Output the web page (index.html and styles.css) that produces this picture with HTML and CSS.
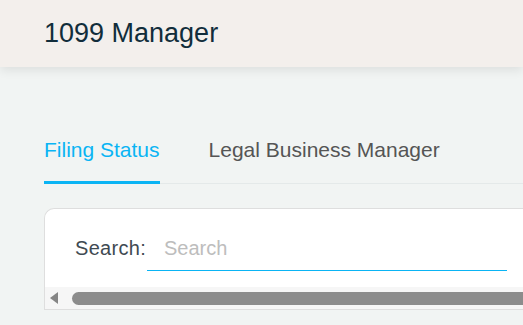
FILE: index.html
```html
<!DOCTYPE html>
<html lang="en">
<head>
<meta charset="utf-8">
<title>1099 Manager</title>
<link rel="stylesheet" href="styles.css">
</head>
<body>
<header class="app-header">
  <h1 class="app-title">1099 Manager</h1>
</header>
<main class="main">
  <nav class="tabs">
    <a class="tab tab-active">Filing Status</a>
    <a class="tab">Legal Business Manager</a>
  </nav>
  <section class="card">
    <div class="search-row">
      <label class="search-label" for="q">Search:</label>
      <input class="search-input" id="q" type="text" placeholder="Search">
    </div>
    <div class="hscroll">
      <span class="hscroll-arrow"></span>
      <span class="hscroll-thumb"></span>
    </div>
  </section>
</main>
</body>
</html>
```

FILE: styles.css
```css
html, body {
  margin: 0;
  padding: 0;
}
body {
  background: #f1f4f3;
  font-family: "Liberation Sans", Arial, sans-serif;
  height: 325px;
  overflow: hidden;
}
.app-header {
  height: 67px;
  background: #f3efec;
  display: flex;
  align-items: center;
  padding-left: 44px;
  box-shadow: 0 3px 10px rgba(0, 0, 0, 0.09);
  position: relative;
  z-index: 1;
}
.app-title {
  margin: 0;
  font-size: 27px;
  font-weight: 400;
  color: #112d3b;
  line-height: 31px;
}
.main {
  padding-left: 44px;
}
.tabs {
  margin-top: 71px;
  display: flex;
  gap: 49px;
  border-bottom: 1px solid #e4e9e9;
}
.tab {
  font-size: 21px;
  line-height: 24px;
  color: #555555;
  padding-bottom: 19px;
  border-bottom: 3px solid transparent;
  margin-bottom: -1px;
}
.tab-active {
  color: #0ab4f4;
  border-bottom-color: #0ab4f4;
}
.card {
  margin-top: 24px;
  background: #ffffff;
  border: 1px solid #dedede;
  border-right: none;
  border-radius: 10px 0 0 0;
  padding-top: 24px;
}
.search-row {
  display: flex;
  align-items: baseline;
  padding-left: 30px;
  gap: 1px;
  margin-bottom: 16px;
}
.search-label {
  font-size: 20px;
  line-height: 23px;
  color: #3f4a52;
  letter-spacing: 0.3px;
}
.search-input {
  width: 360px;
  box-sizing: border-box;
  font-family: "Liberation Sans", Arial, sans-serif;
  font-size: 20px;
  line-height: 23px;
  padding: 4px 17px 10px;
  border: none;
  border-bottom: 1px solid #0ab4f4;
  outline: none;
  background: transparent;
  color: #333;
}
.search-input::placeholder {
  color: #bdbdbd;
}
.hscroll {
  height: 22px;
  background: #f6f6f6;
  display: flex;
  align-items: center;
  padding-left: 5px;
  gap: 14px;
}
.hscroll-arrow {
  width: 0;
  height: 0;
  border-top: 6px solid transparent;
  border-bottom: 6px solid transparent;
  border-right: 8px solid #858585;
}
.hscroll-thumb {
  flex: 1;
  height: 13px;
  border-radius: 7px 0 0 7px;
  background: #8c8c8c;
}
```
